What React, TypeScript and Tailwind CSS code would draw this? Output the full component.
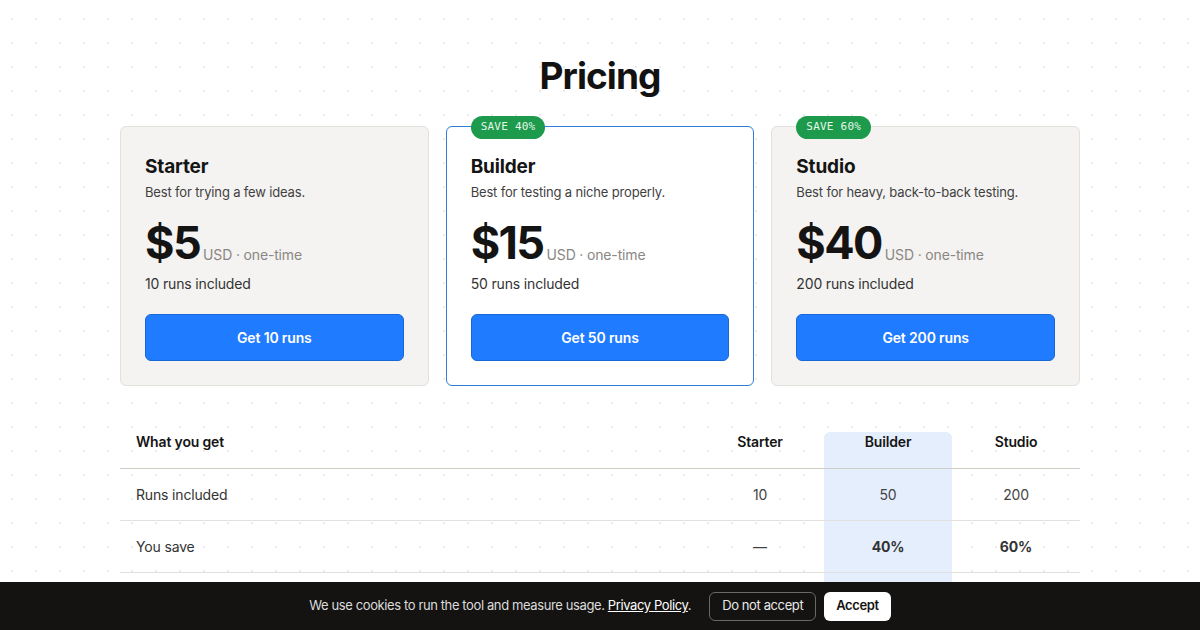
import { Fragment } from 'react'

const plans = [
  { name: 'Starter', blurb: 'Best for trying a few ideas.', price: '$5', runs: 10, save: null as string | null, featured: false },
  { name: 'Builder', blurb: 'Best for testing a niche properly.', price: '$15', runs: 50, save: '40%', featured: true },
  { name: 'Studio', blurb: 'Best for heavy, back-to-back testing.', price: '$40', runs: 200, save: '60%', featured: false },
]

const rows = [
  { label: 'Runs included', values: ['10', '50', '200'], bold: false },
  { label: 'You save', values: ['—', '40%', '60%'], bold: true },
  { label: 'Best for', values: ['', '', ''], bold: false },
]

function PlanCard({ plan }: { plan: typeof plans[number] }) {
  return (
    <div
      className={`relative rounded-md border px-6 pt-[26px] pb-6 ${
        plan.featured ? 'bg-white border-[#2f7fd9]' : 'bg-[#f4f3f1] border-[#e4e1dc]'
      }`}
    >
      {plan.save && (
        <span className="absolute -top-[11px] left-6 rounded-full bg-[#1d9a4b] px-[10px] h-[23px] flex items-center text-[11px] tracking-[0.02em] text-[#e6f7ec] font-['DejaVu_Sans_Mono',monospace]">
          SAVE {plan.save}
        </span>
      )}
      <h3 className="text-[19px] font-bold leading-7 text-[#151515]">{plan.name}</h3>
      <p className="mt-[1px] text-[13px] leading-5 text-[#3f3f3f]">{plan.blurb}</p>
      <div className="mt-[17px] flex items-end gap-[3px]">
        <span className="text-[45px] font-bold leading-[48px] tracking-[-0.035em] text-[#141414]">{plan.price}</span>
        <span className="mb-[2px] text-[14px] text-[#8a8784]">USD · one-time</span>
      </div>
      <p className="mt-[7px] text-[14px] leading-5 text-[#333]">{plan.runs} runs included</p>
      <button className="mt-5 h-[47px] w-full rounded-md border border-[#1767d6] bg-[#1f7bff] text-[14px] font-semibold text-white">
        Get {plan.runs} runs
      </button>
    </div>
  )
}

export default function App() {
  return (
    <div className="min-h-screen bg-white bg-[radial-gradient(#ececec_1.2px,transparent_1.3px)] bg-[size:24px_24px] bg-[position:0_7px] font-['Inter',sans-serif] tracking-[-0.01em] text-[#151515]">
      <main className="mx-auto w-[960px] pt-[52px] pb-24">
        <h1 className="text-center text-[37px] font-bold leading-[48px] tracking-[-0.025em] text-[#121212]">Pricing</h1>

        <div className="mt-[26px] grid grid-cols-3 gap-[17px]">
          {plans.map(p => (
            <PlanCard key={p.name} plan={p} />
          ))}
        </div>

        <div className="mt-[34px] grid grid-cols-[1fr_128px_128px_128px]">
          <div className="pt-3 border-b border-[#cfcbc4]">
            <div className="h-9 pl-4 text-[14px] font-semibold leading-5">What you get</div>
          </div>
          {plans.map(p => (
            <div key={p.name} className="pt-3 border-b border-[#cfcbc4]">
              <div
                className={`h-9 text-center text-[14px] font-semibold leading-5 ${
                  p.featured ? 'rounded-t-md bg-[#e5eefd]' : ''
                }`}
              >
                {p.name}
              </div>
            </div>
          ))}

          {rows.map(r => (
            <Fragment key={r.label}>
              <div className="flex h-[52px] items-center border-b border-[#e3e1dd] pl-4 text-[14px] text-[#333]">
                {r.label}
              </div>
              {r.values.map((v, i) => (
                <div
                  key={i}
                  className={`flex h-[52px] items-center justify-center border-b border-[#e3e1dd] text-[14px] ${
                    i === 1 ? 'bg-[#e5eefd]' : ''
                  } ${r.bold && i > 0 ? 'font-bold text-[#333]' : 'text-[#444]'}`}
                >
                  {v}
                </div>
              ))}
            </Fragment>
          ))}
        </div>
      </main>

      <div className="fixed inset-x-0 bottom-0 flex h-12 items-center justify-center gap-2 bg-[#141311] text-[13px] tracking-[-0.03em]">
        <p className="mr-[10px] text-[#dcdcdc]">
          We use cookies to run the tool and measure usage.{' '}
          <a href="#" className="text-white underline">Privacy Policy</a>.
        </p>
        <button className="h-[29px] rounded-md border border-[#6a6866] px-3 text-[#e8e8e8]">Do not accept</button>
        <button className="h-[29px] rounded-md bg-white px-3 font-semibold text-[#141311]">Accept</button>
      </div>
    </div>
  )
}
